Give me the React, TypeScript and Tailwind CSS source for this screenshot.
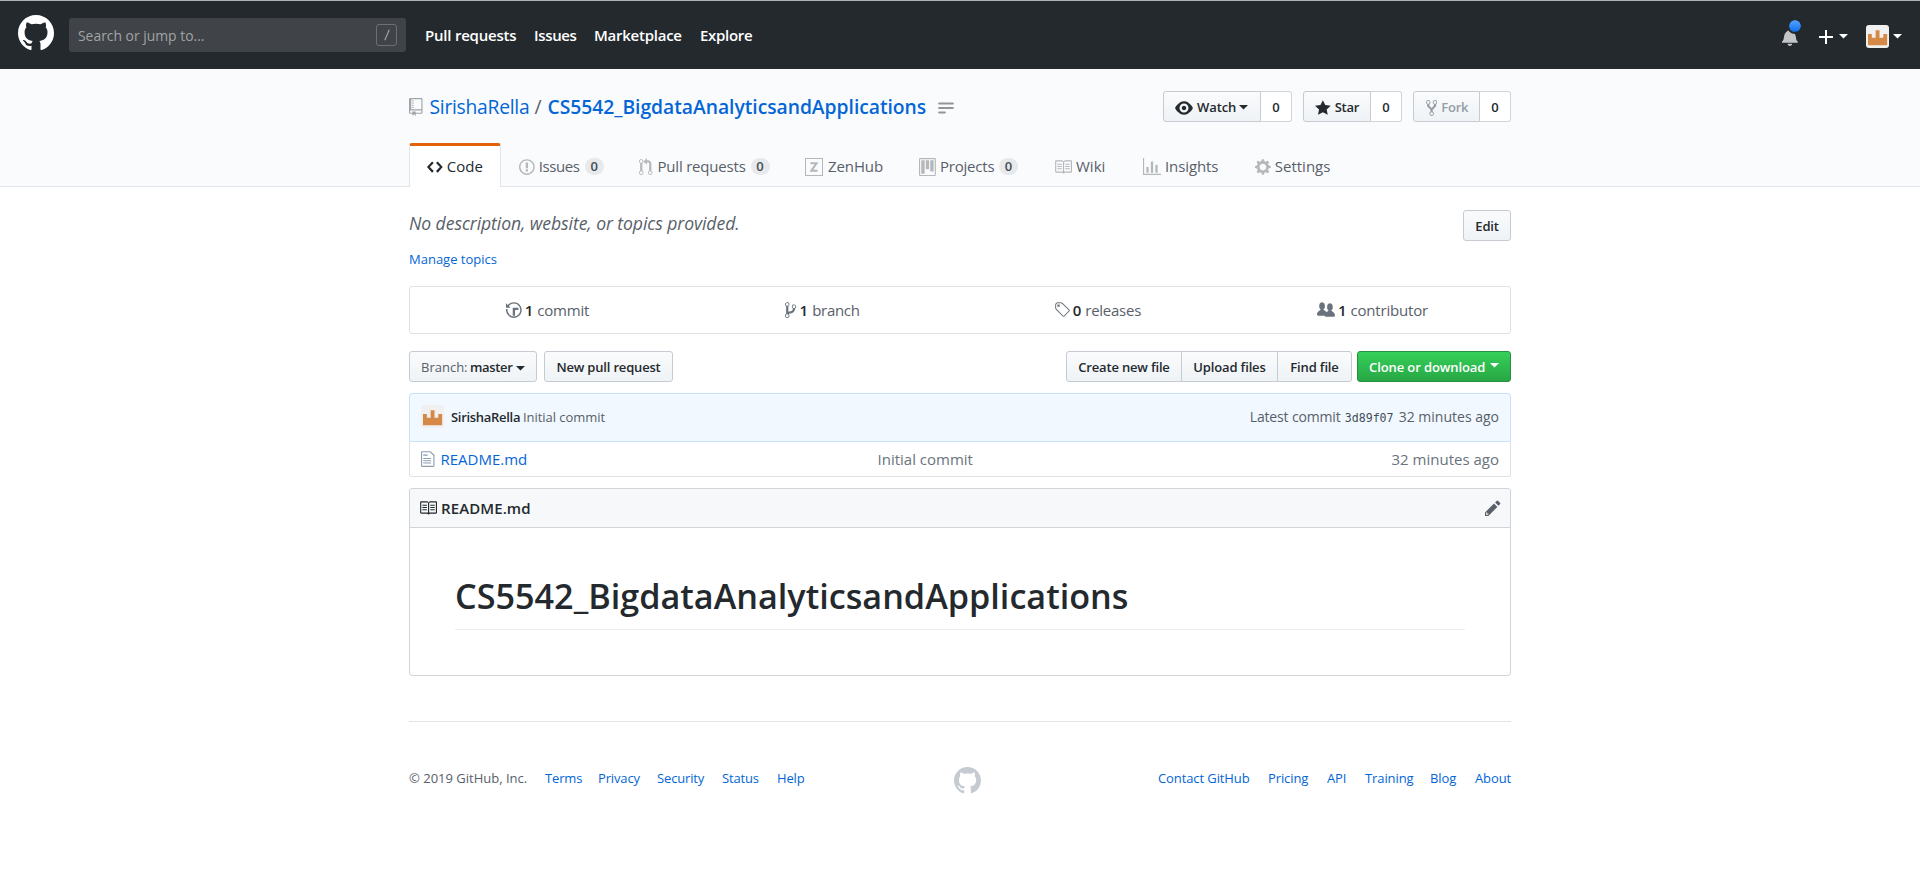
import type { ReactNode } from "react";

const P = {
  mark: "M8 0C3.58 0 0 3.58 0 8c0 3.54 2.29 6.53 5.47 7.59.4.07.55-.17.55-.38 0-.19-.01-.82-.01-1.49-2.01.37-2.53-.49-2.69-.94-.09-.23-.48-.94-.82-1.13-.28-.15-.68-.52-.01-.53.63-.01 1.08.58 1.23.82.72 1.21 1.87.87 2.33.66.07-.52.28-.87.51-1.07-1.78-.2-3.64-.89-3.64-3.95 0-.87.31-1.59.82-2.15-.08-.2-.36-1.02.08-2.12 0 0 .67-.21 2.2.82.64-.18 1.32-.27 2-.27.68 0 1.36.09 2 .27 1.53-1.04 2.2-.82 2.2-.82.44 1.1.16 1.92.08 2.12.51.56.82 1.27.82 2.15 0 3.07-1.87 3.75-3.65 3.95.29.25.54.73.54 1.48 0 1.07-.01 1.93-.01 2.2 0 .21.15.46.55.38A8.013 8.013 0 0016 8c0-4.42-3.58-8-8-8z",
  repo: "M4 9H3V8h1v1zm0-3H3v1h1V6zm0-2H3v1h1V4zm0-2H3v1h1V2zm8-1v12c0 .55-.45 1-1 1H6v2l-1.5-1.5L3 16v-2H1c-.55 0-1-.45-1-1V1c0-.55.45-1 1-1h10c.55 0 1 .45 1 1zm-1 10H1v2h2v-1h3v1h5v-2zm0-10H2v9h9V1z",
  code: "M9.5 3L8 4.5 11.5 8 8 11.5 9.5 13 14 8 9.5 3zm-5 0L0 8l4.5 5L6 11.5 2.5 8 6 4.5 4.5 3z",
  issue: "M7 2.3c3.14 0 5.7 2.56 5.7 5.7s-2.56 5.7-5.7 5.7A5.71 5.71 0 011.3 8c0-3.14 2.56-5.7 5.7-5.7zM7 1C3.14 1 0 4.14 0 8s3.14 7 7 7 7-3.14 7-7-3.14-7-7-7zm1 3H6v5h2V4zm0 6H6v2h2v-2z",
  pr: "M11 11.28V5c-.03-.78-.34-1.47-.94-2.06C9.46 2.35 8.78 2.03 8 2H7V0L4 3l3 3V4h1c.27.02.48.11.69.31.21.2.3.42.31.69v6.28A1.993 1.993 0 0010 15a1.993 1.993 0 001-3.72zm-1 2.92c-.66 0-1.2-.55-1.2-1.2 0-.65.55-1.2 1.2-1.2.65 0 1.2.55 1.2 1.2 0 .65-.55 1.2-1.2 1.2zM4 3c0-1.11-.89-2-2-2a1.993 1.993 0 00-1 3.72v6.56A1.993 1.993 0 002 15a1.993 1.993 0 001-3.72V4.72c.59-.34 1-.98 1-1.72zm-.8 10c0 .66-.55 1.2-1.2 1.2-.65 0-1.2-.55-1.2-1.2 0-.65.55-1.2 1.2-1.2.65 0 1.2.55 1.2 1.2zM2 4.2C1.34 4.2.8 3.65.8 3c0-.65.55-1.2 1.2-1.2.65 0 1.2.55 1.2 1.2 0 .65-.55 1.2-1.2 1.2z",
  project: "M10 12h3V2h-3v10zm-4-2h3V2H6v8zm-4 4h3V2H2v12zm-1 1h13V1H1v14zM14 0H1a1 1 0 00-1 1v14a1 1 0 001 1h13a1 1 0 001-1V1a1 1 0 00-1-1z",
  book: "M3 5h4v1H3V5zm0 3h4V7H3v1zm0 2h4V9H3v1zm11-5h-4v1h4V5zm0 2h-4v1h4V7zm0 2h-4v1h4V9zm2-6v9c0 .55-.45 1-1 1H9.5l-1 1-1-1H2c-.55 0-1-.45-1-1V3c0-.55.45-1 1-1h5.5l1 1 1-1H15c.55 0 1 .45 1 1zm-8 .5L7.5 3H2v9h6V3.5zm7-.5H9.5l-.5.5V12h6V3z",
  graph: "M16 14v1H0V0h1v14h15zM5 13H3V8h2v5zm4 0H7V3h2v10zm4 0h-2V6h2v7z",
  gear: "M14 8.77v-1.6l-1.94-.64-.45-1.09.88-1.84-1.13-1.13-1.81.91-1.09-.45-.69-1.92h-1.6l-.63 1.94-1.11.45-1.84-.88-1.13 1.13.91 1.81-.45 1.09L0 7.23v1.59l1.94.64.45 1.09-.88 1.84 1.13 1.13 1.81-.91 1.09.45.69 1.92h1.59l.63-1.94 1.11-.45 1.84.88 1.13-1.13-.92-1.81.47-1.09L14 8.75v.02zM7 11c-1.66 0-3-1.34-3-3s1.34-3 3-3 3 1.34 3 3-1.34 3-3 3z",
  eye: "M8.06 2C3 2 0 8 0 8s3 6 8.06 6C13 14 16 8 16 8s-3-6-7.94-6zM8 12c-2.2 0-4-1.78-4-4 0-2.2 1.8-4 4-4 2.22 0 4 1.8 4 4 0 2.22-1.78 4-4 4zm2-4c0 1.11-.89 2-2 2-1.11 0-2-.89-2-2 0-1.11.89-2 2-2 1.11 0 2 .89 2 2z",
  star: "M14 6l-4.9-.64L7 1 4.9 5.36 0 6l3.6 3.26L2.67 14 7 11.67 11.33 14l-.93-4.74L14 6z",
  fork: "M8 1a1.993 1.993 0 00-1 3.72V6L5 8 3 6V4.72A1.993 1.993 0 002 1a1.993 1.993 0 00-1 3.72V6.5l3 3v1.78A1.993 1.993 0 005 15a1.993 1.993 0 001-3.72V9.5l3-3V4.72A1.993 1.993 0 008 1zM2 4.2C1.34 4.2.8 3.65.8 3c0-.65.55-1.2 1.2-1.2.65 0 1.2.55 1.2 1.2 0 .65-.55 1.2-1.2 1.2zm3 10c-.66 0-1.2-.55-1.2-1.2 0-.65.55-1.2 1.2-1.2.65 0 1.2.55 1.2 1.2 0 .65-.55 1.2-1.2 1.2zm3-10c-.66 0-1.2-.55-1.2-1.2 0-.65.55-1.2 1.2-1.2.65 0 1.2.55 1.2 1.2 0 .65-.55 1.2-1.2 1.2z",
  history: "M8 13H6V6h5v2H8v5zM7 1C4.81 1 2.87 2.02 1.59 3.59L0 2v4h4L2.5 4.5C3.55 3.17 5.17 2.3 7 2.3c3.14 0 5.7 2.56 5.7 5.7s-2.56 5.7-5.7 5.7A5.71 5.71 0 011.3 8c0-.34.03-.67.09-1H.08C.03 7.33 0 7.66 0 8c0 3.86 3.14 7 7 7s7-3.14 7-7-3.14-7-7-7z",
  branch: "M10 5c0-1.11-.89-2-2-2a1.993 1.993 0 00-1 3.72v.3c-.02.52-.23.98-.63 1.38-.4.4-.86.61-1.38.63-.83.02-1.48.16-2 .45V4.72a1.993 1.993 0 00-1-3.72C.88 1 0 1.89 0 3a2 2 0 001 1.72v6.56c-.59.35-1 .99-1 1.72 0 1.11.89 2 2 2 1.11 0 2-.89 2-2 0-.53-.2-1-.53-1.36.09-.06.48-.41.59-.47.25-.11.56-.17.94-.17 1.05-.05 1.95-.45 2.75-1.25S8.95 7.77 9 6.73h-.02C9.59 6.37 10 5.73 10 5zM2 1.8c.66 0 1.2.55 1.2 1.2 0 .65-.55 1.2-1.2 1.2C1.35 4.2.8 3.65.8 3c0-.65.55-1.2 1.2-1.2zm0 12.41c-.66 0-1.2-.55-1.2-1.2 0-.65.55-1.2 1.2-1.2.65 0 1.2.55 1.2 1.2 0 .65-.55 1.2-1.2 1.2zm6-8c-.66 0-1.2-.55-1.2-1.2 0-.65.55-1.2 1.2-1.2.65 0 1.2.55 1.2 1.2 0 .65-.55 1.2-1.2 1.2z",
  tag: "M7.73 1.73C7.26 1.26 6.62 1 5.96 1H3.5C2.13 1 1 2.13 1 3.5v2.47c0 .66.27 1.3.73 1.77l6.06 6.06c.39.39 1.02.39 1.41 0l4.59-4.59a.996.996 0 000-1.41L7.73 1.73zM2.38 7.09c-.31-.3-.47-.7-.47-1.13V3.5c0-.88.72-1.59 1.59-1.59h2.47c.42 0 .83.16 1.13.47l6.14 6.13-4.73 4.73-6.13-6.15zM3.01 3h2v2H3V3h.01z",
  org: "M16 12.999c0 .439-.45 1-1 1H7.995c-.539 0-.994-.447-.995-.999H1c-.54 0-1-.561-1-1 0-2.634 3-4 3-4s.229-.409 0-1c-.841-.621-1.058-.59-1-3 .058-2.419 1.367-3 2.5-3s2.442.58 2.5 3c.058 2.41-.159 2.379-1 3-.229.59 0 1 0 1s1.549.711 2.42 2.088C9.196 9.369 10 8.999 10 8.999s.229-.409 0-1c-.841-.62-1.058-.59-1-3 .058-2.419 1.367-3 2.5-3s2.437.581 2.495 3c.059 2.41-.158 2.38-1 3-.229.59 0 1 0 1s3.005 1.366 3.005 4z",
  file: "M6 5H2V4h4v1zM2 8h7V7H2v1zm0 2h7V9H2v1zm0 2h7v-1H2v1zm10-7.5V14c0 .55-.45 1-1 1H1c-.55 0-1-.45-1-1V2c0-.55.45-1 1-1h7.5L12 4.5zM11 5L8 2H1v12h10V5z",
  pencil: "M0 12v3h3l8-8-3-3-8 8zm3 2H1v-2h1v1h1v1zm10.3-9.3L12 6 9 3l1.3-1.3a.996.996 0 011.41 0l1.59 1.59c.39.39.39 1.02 0 1.41z",
  bell: "M14 12v1H0v-1l.73-.58c.77-.77.81-2.55 1.19-4.42C2.69 3.23 6 2 6 2c0-.55.45-1 1-1s1 .45 1 1c0 0 3.39 1.23 4.16 5 .38 1.88.42 3.66 1.19 4.42l.66.58H14zm-7 4c1.11 0 2-.89 2-2H5c0 1.11.89 2 2 2z",
};

/** Icon drawn on a 16-unit-high grid; `w` is its width in grid units. */
function Icon({ d, w, scale = 1.125, className = "" }: { d: string; w: number; scale?: number; className?: string }) {
  return (
    <svg viewBox={`0 0 ${w} 16`} width={w * scale} height={16 * scale} className={`shrink-0 fill-current ${className}`}>
      <path fillRule="evenodd" d={d} />
    </svg>
  );
}

function Caret({ className = "" }: { className?: string }) {
  return (
    <svg viewBox="0 0 9 5" width="9" height="5" className={`shrink-0 fill-current ${className}`}>
      <path d="M0 0h9L4.5 4.6z" />
    </svg>
  );
}

function Avatar({ className = "" }: { className?: string }) {
  return (
    <svg viewBox="0 0 23 23" width="23" height="23" className={`shrink-0 rounded-[3px] bg-[#f0f0f0] ${className}`}>
      <path fill="#d68846" d="M2 9h3.85v3.8h3.8V5.2h3.85v7.6h3.8V9h3.85v11.3H2z" />
    </svg>
  );
}

const BTN =
  "flex h-[31px] items-center whitespace-nowrap border border-[#c6cbd1] bg-linear-to-b from-[#fafbfc] to-[#eff3f6] pt-[2px] text-[13px] font-semibold text-[#24292e]";

function Tab({ children, width }: { children: ReactNode; width: string }) {
  return <a className={`flex shrink-0 items-center whitespace-nowrap text-[#586069] ${width}`}>{children}</a>;
}

function Counter() {
  return (
    <span className="flex h-[17px] w-[19px] items-center justify-center rounded-full bg-[#e7e9eb] text-[13px] leading-none font-semibold text-[#444d56]">
      0
    </span>
  );
}

function Count() {
  return (
    <span className="flex h-[31px] w-[31px] items-center justify-center rounded-r-[3px] border border-l-0 border-[#d1d5da] bg-white pt-[2px] text-[13px] font-semibold">
      0
    </span>
  );
}

function Stat({ children }: { children: ReactNode }) {
  return <div className="flex flex-1 items-center justify-center whitespace-nowrap text-[#586069] [&_svg]:text-[#6a737d]">{children}</div>;
}

function Header() {
  return (
    <header className="flex h-[69px] items-center border-t border-[#b0b3b5] bg-[#24292e] pl-[18px] font-semibold text-white">
      <Icon d={P.mark} w={16} scale={2.25} className="mb-1" />
      <div className="ml-[15px] flex h-[34px] w-[337px] items-center justify-between rounded-[3px] bg-[#404448] px-[9px] text-[13.9px] font-normal text-[#a0a3a5]">
        <span className="pt-[2px]">Search or jump to...</span>
        <span className="flex h-[22px] w-[21px] items-center justify-center rounded-[3px] border border-[#6c7073]">
          <svg viewBox="0 0 6 12" width="6" height="12">
            <path d="M5.2.8L.8 11.2" stroke="#a4a7a9" strokeWidth="1.1" />
          </svg>
        </span>
      </div>
      <nav className="flex text-[15px] whitespace-nowrap">
        <a className="ml-[19px] w-[109px] tracking-[-0.22px]">Pull requests</a>
        <a className="w-[60px] tracking-[-0.35px]">Issues</a>
        <a className="w-[106px] tracking-[-0.25px]">Marketplace</a>
        <a className="tracking-[-0.3px]">Explore</a>
      </nav>
      <div className="mt-[3px] ml-auto flex items-center pr-[18px]">
        <span className="relative">
          <Icon d={P.bell} w={14} className="text-[#c3c5c7]" />
          <span className="absolute -top-[10px] left-[5px] size-[16px] rounded-full border-2 border-[#24292e] bg-linear-to-b from-[#54a3ff] to-[#006eed] bg-clip-padding" />
        </span>
        <svg viewBox="0 0 14 14" width="14" height="14" className="ml-[21px]">
          <path d="M7 0v14M0 7h14" stroke="#fff" strokeWidth="2" />
        </svg>
        <Caret className="ml-[6px]" />
        <Avatar className="ml-[18px]" />
        <Caret className="ml-1" />
      </div>
    </header>
  );
}

function RepoHead() {
  return (
    <div className="h-[118px] border-b border-[#e1e4e8] bg-[#fafbfc]">
      <div className="mx-auto w-[1102px] pt-[22px]">
        <div className="flex h-[31px] items-center">
          <Icon d={P.repo} w={12} className="mr-[7px] text-[#a0a5aa]" />
          <h1 className="flex text-[19.3px] leading-[31px] whitespace-nowrap text-[#0366d6]">
            <a className="w-[105px] tracking-[-0.27px]">SirishaRella</a>
            <span className="w-[13px] text-[#586069]">/</span>
            <a className="w-[389px] font-semibold tracking-[-0.03px]">CS5542_BigdataAnalyticsandApplications</a>
          </h1>
          <svg viewBox="0 0 16 12" width="16" height="12" className="mt-[3px] ml-px">
            <path d="M1.2 1.5h13.6M1.2 6h13.6M1.2 10.5h5.6" stroke="#959595" strokeWidth="2.2" strokeLinecap="round" />
          </svg>
          <div className="ml-auto flex gap-[11px]">
            <div className="flex">
              <span className={`${BTN} w-[98px] rounded-l-[3px] pl-[11px]`}>
                <Icon d={P.eye} w={16} />
                <span className="ml-1 w-[42px] tracking-[-0.1px]">Watch</span>
                <Caret />
              </span>
              <Count />
            </div>
            <div className="flex">
              <span className={`${BTN} w-[68px] rounded-l-[3px] pl-[11px]`}>
                <Icon d={P.star} w={14} />
                <span className="ml-1 tracking-[-0.3px]">Star</span>
              </span>
              <Count />
            </div>
            <div className="flex">
              <span className={`${BTN} w-[67px] rounded-l-[3px] pl-[12px] !text-[#959da5]`}>
                <Icon d={P.fork} w={10} />
                <span className="ml-1 tracking-[-0.2px]">Fork</span>
              </span>
              <Count />
            </div>
          </div>
        </div>
        <nav className="mt-[21px] flex h-[44px] text-[15px] [&_svg]:text-[#b5b8bb]">
          <a className="flex w-[92px] shrink-0 items-center rounded-t-[3px] border-x border-t-[3px] border-x-[#e1e4e8] border-t-[#e36209] bg-white pl-[17px] whitespace-nowrap text-[#24292e] [&_svg]:!text-[#24292e]">
            <Icon d={P.code} w={14} />
            <span className="ml-1">Code</span>
          </a>
          <div className="flex pt-[3px] pl-[18px]">
            <Tab width="w-[120px]">
              <Icon d={P.issue} w={14} />
              <span className="ml-1 w-[46px] tracking-[-0.4px]">Issues</span>
              <Counter />
            </Tab>
            <Tab width="w-[166px]">
              <Icon d={P.pr} w={12} />
              <span className="ml-[5px] w-[93px] tracking-[-0.2px]">Pull requests</span>
              <Counter />
            </Tab>
            <Tab width="w-[114px]">
              <span className="flex size-[18px] items-center justify-center border-[1.5px] border-[#b5b8bb]">
                <svg viewBox="0 0 8 10" width="8" height="10">
                  <path d="M.5 1.2h6.2L1.2 8.8h6.3" fill="none" stroke="#b5b8bb" strokeWidth="2" />
                </svg>
              </span>
              <span className="ml-[5px] tracking-[-0.1px]">ZenHub</span>
            </Tab>
            <Tab width="w-[135px]">
              <Icon d={P.project} w={15} />
              <span className="ml-1 w-[59px] tracking-[-0.2px]">Projects</span>
              <Counter />
            </Tab>
            <Tab width="w-[89px]">
              <Icon d={P.book} w={16} />
              <span className="ml-1">Wiki</span>
            </Tab>
            <Tab width="w-[112px]">
              <Icon d={P.graph} w={16} />
              <span className="ml-1 tracking-[-0.1px]">Insights</span>
            </Tab>
            <Tab width="w-[80px]">
              <Icon d={P.gear} w={14} />
              <span className="ml-1">Settings</span>
            </Tab>
          </div>
        </nav>
      </div>
    </div>
  );
}

const FOOT_LEFT = [
  ["Terms", "w-[53px]"],
  ["Privacy", "w-[59px]"],
  ["Security", "w-[65px]"],
  ["Status", "w-[55px]"],
  ["Help", "w-[30px]"],
];
const FOOT_RIGHT = [
  ["Contact GitHub", "w-[110px]"],
  ["Pricing", "w-[59px]"],
  ["API", "w-[38px]"],
  ["Training", "w-[65px]"],
  ["Blog", "w-[45px]"],
  ["About", "w-[36px]"],
];

export default function App() {
  return (
    <div className="h-[870px] overflow-hidden bg-white font-['Open_Sans',sans-serif] text-[#24292e]">
      <Header />
      <RepoHead />
      <main className="mx-auto w-[1102px]">
        <div className="flex justify-between pt-[23px]">
          <div>
            <p className="text-[17.6px] leading-[27px] tracking-[-0.08px] whitespace-nowrap text-[#586069] italic">No description, website, or topics provided.</p>
            <a className="mt-[12px] block text-[13px] leading-[20px] text-[#0366d6]">Manage topics</a>
          </div>
          <span className={`${BTN} w-[48px] justify-center rounded-[3px] tracking-[-0.2px]`}>Edit</span>
        </div>

        <div className="mt-[17px] flex h-[48px] rounded-[3px] border border-[#dfe2e5] text-[15px] [&_b]:mr-1 [&_b]:ml-[3px] [&_b]:font-semibold [&_b]:text-[#24292e]">
          <Stat>
            <Icon d={P.history} w={14} />
            <b>1</b>
            <span className="tracking-[-0.2px]">commit</span>
          </Stat>
          <Stat>
            <Icon d={P.branch} w={10} />
            <b>1</b>
            <span className="tracking-[-0.3px]">branch</span>
          </Stat>
          <Stat>
            <Icon d={P.tag} w={14} />
            <b>0</b>
            <span className="tracking-[-0.25px]">releases</span>
          </Stat>
          <Stat>
            <Icon d={P.org} w={16} />
            <b>1</b>
            <span className="tracking-[-0.18px]">contributor</span>
          </Stat>
        </div>

        <div className="mt-[17px] flex">
          <span className={`${BTN} w-[128px] rounded-[3px] pl-[11px]`}>
            <span className="w-[49px] font-normal text-[#586069]">Branch:</span>
            <span className="w-[46px] tracking-[-0.35px]">master</span>
            <Caret className="mt-px" />
          </span>
          <span className={`${BTN} ml-[7px] w-[129px] justify-center rounded-[3px] tracking-[-0.18px]`}>New pull request</span>
          <span className={`${BTN} ml-auto w-[116px] justify-center rounded-l-[3px] tracking-[-0.18px]`}>Create new file</span>
          <span className={`${BTN} -ml-px w-[97px] justify-center tracking-[-0.15px]`}>Upload files</span>
          <span className={`${BTN} -ml-px w-[75px] justify-center rounded-r-[3px] tracking-[-0.15px]`}>Find file</span>
          <span className="ml-[5px] flex h-[31px] w-[154px] items-center rounded-[3px] border border-[#269140] bg-linear-to-b from-[#34d058] to-[#28a745] pt-[2px] pl-[11px] text-[13px] font-semibold whitespace-nowrap text-white">
            <span className="w-[121px] tracking-[-0.1px]">Clone or download</span>
            <Caret className="mb-[4px]" />
          </span>
        </div>

        <div className="mt-[11px]">
          <div className="flex h-[49px] items-center rounded-t-[3px] border border-[#c8e1ff] bg-[#f1f8ff] px-[11px] whitespace-nowrap text-[#586069]">
            <Avatar className="mb-[3px]" />
            <span className="ml-[7px] w-[72px] text-[13px] font-semibold tracking-[-0.3px] text-[#24292e]">SirishaRella</span>
            <span className="text-[13px] tracking-[-0.05px]">Initial commit</span>
            <div className="mb-[2px] ml-auto flex items-baseline text-[14px]">
              <span className="w-[95px] tracking-[-0.15px]">Latest commit</span>
              <span className="w-[54px] font-['DejaVu_Sans_Mono',monospace] text-[11.6px] text-[#444d56]">3d89f07</span>
              <span>32 minutes ago</span>
            </div>
          </div>
          <div className="flex h-[35px] items-center rounded-b-[3px] border border-t-0 border-[#dfe2e5] px-[11px] text-[15px] whitespace-nowrap text-[#6a737d]">
            <Icon d={P.file} w={12} className="text-[#8f9db0]" />
            <a className="ml-[6px] w-[437px] text-[#0366d6]">README.md</a>
            <span>Initial commit</span>
            <span className="ml-auto">32 minutes ago</span>
          </div>
        </div>

        <div className="mt-[11px] h-[188px] rounded-[3px] border border-[#d1d5da]">
          <div className="flex h-[39px] items-center rounded-t-[2px] border-b border-[#d1d5da] bg-[#f6f8fa] pr-[9px] pl-[9px] text-[15px] font-semibold">
            <Icon d={P.book} w={16} />
            <span className="ml-1 tracking-[0.1px]">README.md</span>
            <Icon d={P.pencil} w={14} className="ml-auto text-[#586069]" />
          </div>
          <div className="px-[45px] pt-[45px]">
            <h1 className="h-[57px] border-b border-[#eaecef] text-[34.2px] leading-[46px] font-semibold">CS5542_BigdataAnalyticsandApplications</h1>
          </div>
        </div>

        <footer className="mt-[45px] flex h-[80px] border-t border-[#e1e4e8] pt-[46px] text-[13px] leading-[20px] whitespace-nowrap text-[#0366d6]">
          <span className="w-[136px] text-[#586069]">© 2019 GitHub, Inc.</span>
          {FOOT_LEFT.map(([t, w]) => (
            <a key={t} className={`shrink-0 tracking-[-0.15px] ${w}`}>
              {t}
            </a>
          ))}
          <Icon d={P.mark} w={16} scale={1.6875} className="mt-[-1px] ml-[147px] text-[#c6cbd1]" />
          <div className="ml-auto flex">
            {FOOT_RIGHT.map(([t, w]) => (
              <a key={t} className={`shrink-0 tracking-[-0.1px] ${w}`}>
                {t}
              </a>
            ))}
          </div>
        </footer>
      </main>
    </div>
  );
}
